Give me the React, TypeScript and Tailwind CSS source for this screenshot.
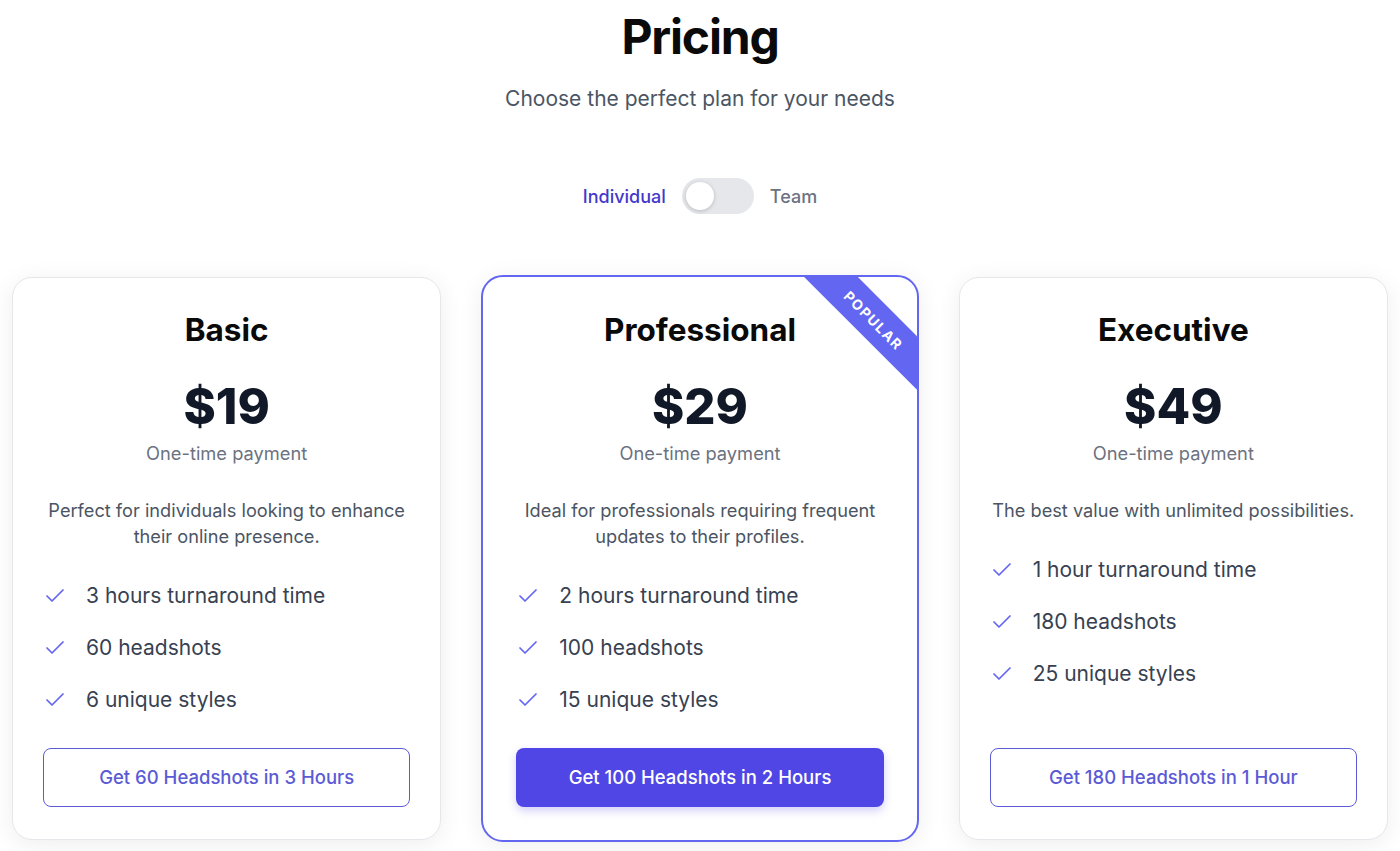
import React from "react";

const CheckIcon = () => (
  <svg width="24" height="24" viewBox="0 0 24 24" fill="none" stroke="#6366f1" strokeWidth="1.75" strokeLinecap="round" strokeLinejoin="round" className="shrink-0">
    <path d="M20 6 9 17l-5-5" />
  </svg>
);

type Plan = {
  name: string;
  price: string;
  desc: string;
  features: string[];
  cta: string;
  popular?: boolean;
};

const plans: Plan[] = [
  {
    name: "Basic",
    price: "$19",
    desc: "Perfect for individuals looking to enhance their online presence.",
    features: ["3 hours turnaround time", "60 headshots", "6 unique styles"],
    cta: "Get 60 Headshots in 3 Hours",
  },
  {
    name: "Professional",
    price: "$29",
    desc: "Ideal for professionals requiring frequent updates to their profiles.",
    features: ["2 hours turnaround time", "100 headshots", "15 unique styles"],
    cta: "Get 100 Headshots in 2 Hours",
    popular: true,
  },
  {
    name: "Executive",
    price: "$49",
    desc: "The best value with unlimited possibilities.",
    features: ["1 hour turnaround time", "180 headshots", "25 unique styles"],
    cta: "Get 180 Headshots in 1 Hour",
  },
];

function Card({ plan }: { plan: Plan }) {
  const pop = plan.popular;
  return (
    <div
      className={
        pop
          ? "relative flex flex-col flex-1 -mx-[3px] -my-[2px] overflow-hidden rounded-[22px] border-2 border-[#6366f1] bg-white px-[33px] pt-[35px] pb-[33px] text-center shadow-[0_4px_24px_rgba(0,0,0,0.07)]"
          : "relative flex flex-col flex-1 overflow-hidden rounded-[20px] border border-[#e5e7eb] bg-white px-[30px] pt-[34px] pb-[32px] text-center shadow-[0_4px_24px_rgba(0,0,0,0.07)]"
      }
    >
      {pop && (
        <div className="absolute top-[24px] right-[-57px] flex h-[38px] w-[200px] rotate-45 items-center justify-center bg-[#6366f1] text-[14px] font-bold tracking-[0.1em] text-white">
          POPULAR
        </div>
      )}
      <h2 className="text-[31.5px] font-bold leading-[36px] text-[#0a0a0a]">{plan.name}</h2>
      <div className="mt-[35px] text-[49px] font-extrabold leading-[48px] text-[#111827]">{plan.price}</div>
      <div className="mt-[8px] text-[18.3px] leading-[28px] text-[#6b7280]">One-time payment</div>
      <p className="mt-[30px] text-[18.2px] leading-[26px] text-[#4b5563]">{plan.desc}</p>
      <ul className="mt-[33px] flex flex-col gap-[24px] text-left">
        {plan.features.map((f) => (
          <li key={f} className="flex items-center gap-[19px] text-[21px] leading-[28px] text-[#374151]">
            <CheckIcon />
            <span>{f}</span>
          </li>
        ))}
      </ul>
      <div className="mt-auto pt-[34px]">
        {pop ? (
          <button className="flex h-[59px] w-full items-center justify-center rounded-lg bg-[#4f46e5] text-[18.5px] font-medium text-white shadow-[0_4px_8px_rgba(79,70,229,0.25)]">
            {plan.cta}
          </button>
        ) : (
          <button className="flex h-[59px] w-full items-center justify-center rounded-lg border border-[#5b5bd6] bg-white text-[18.5px] font-medium text-[#5b5bd6]">
            {plan.cta}
          </button>
        )}
      </div>
    </div>
  );
}

export default function App() {
  return (
    <div className="min-h-[851px] bg-white font-['Inter',sans-serif]">
      <div className="flex flex-col items-center pt-[13px]">
        <h1 className="text-[48px] font-bold leading-[48px] tracking-tight text-[#0a0a0a]">Pricing</h1>
        <p className="mt-[24px] text-[21px] leading-[28px] text-[#4b5563]">Choose the perfect plan for your needs</p>
        <div className="mt-[65px] flex items-center gap-4">
          <span className="text-[18px] font-medium text-[#4338ca]">Individual</span>
          <div className="flex h-[36px] w-[72px] items-center rounded-full bg-[#e5e7eb] px-[4px]">
            <div className="h-[28px] w-[28px] rounded-full bg-white shadow-[0_1px_4px_rgba(0,0,0,0.2)]" />
          </div>
          <span className="text-[18px] font-medium text-[#6b7280]">Team</span>
        </div>
      </div>
      <div className="mt-[63px] flex items-stretch gap-[43px] px-[12px]">
        {plans.map((p) => (
          <Card key={p.name} plan={p} />
        ))}
      </div>
    </div>
  );
}
